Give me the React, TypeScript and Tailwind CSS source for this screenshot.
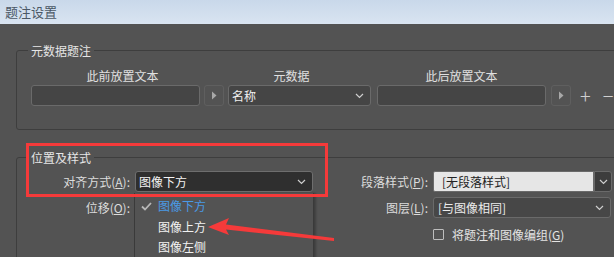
import React from 'react';

const FONT = { fontFamily: '"Microsoft YaHei", "Noto Sans CJK SC", "Noto Sans", sans-serif' };

function Chevron({ className = '' }: { className?: string }) {
  return (
    <svg className={className} width="9" height="6" viewBox="0 0 9 6" fill="none" stroke="currentColor" strokeWidth={1.2}>
      <path d="M1 1l3.5 3.5L8 1" />
    </svg>
  );
}

function PlayBtn() {
  return (
    <div className="w-[20px] h-[21px] rounded-[3px] border border-[#5f5f5f] flex items-center justify-center shrink-0">
      <svg width="6" height="9" viewBox="0 0 6 9">
        <path d="M1 0.5v8L5.5 4.5z" fill="#a8a8a8" />
      </svg>
    </div>
  );
}

export default function App() {
  return (
    <div className="relative w-[614px] h-[257px] overflow-hidden bg-[#535353] text-[12px] text-[#dcdcdc]" style={FONT}>
      {/* Title bar */}
      <div className="h-[24px] px-[5px] flex items-center bg-gradient-to-b from-[#c9d8ea] to-[#d9e4f1] text-[#4b5866] text-[13px]">
        题注设置
      </div>

      {/* Metadata caption group */}
      <fieldset className="ml-[16px] mt-[18px] w-[640px] border border-[#3e3e3e] rounded-[3px] pb-[23px]">
        <legend className="ml-[11px] px-[3px] leading-[17px] text-[#e6e6e6]">元数据题注</legend>
        <div className="flex pl-[14px] pt-[8px] leading-[17px] text-[#e0e0e0]">
          <div className="w-[169px] pl-[14px] text-center">此前放置文本</div>
          <div className="w-[28px]" />
          <div className="w-[143px] text-center pr-[16px]">元数据</div>
          <div className="w-[6px]" />
          <div className="w-[169px] text-center">此后放置文本</div>
        </div>
        <div className="flex items-center pl-[14px] mt-[1px]">
          <div className="w-[169px] h-[21px] rounded-[3px] border border-[#6a6a6a] bg-[#454545] shrink-0" />
          <div className="w-[4px]" />
          <PlayBtn />
          <div className="w-[4px]" />
          <div className="w-[143px] h-[21px] rounded-[3px] border border-[#6a6a6a] bg-[#454545] shrink-0 flex items-center justify-between pl-[3px] pr-[6px] text-[#f0f0f0]">
            <span>名称</span>
            <Chevron className="text-[#cfcfcf]" />
          </div>
          <div className="w-[6px]" />
          <div className="w-[169px] h-[21px] rounded-[3px] border border-[#6a6a6a] bg-[#454545] shrink-0" />
          <div className="w-[5px]" />
          <PlayBtn />
          <div className="w-[9px]" />
          <span className="text-[20px] leading-none text-[#d0d0d0] font-light">+</span>
          <div className="w-[12px]" />
          <span className="text-[20px] leading-none text-[#d0d0d0] font-light">−</span>
        </div>
      </fieldset>

      {/* Position & style group */}
      <fieldset className="ml-[16px] mt-[19px] w-[640px] h-[120px] border border-[#3e3e3e] rounded-[3px]">
        <legend className="ml-[11px] px-[3px] leading-[17px] text-[#e6e6e6]">位置及样式</legend>
        <div className="flex items-center mt-[5px] h-[21px]">
          <div className="w-[113px] text-right">
            对齐方式(<span className="underline">A</span>):
          </div>
          <div className="w-[5px]" />
          <div className="w-[178px] h-[21px] rounded-[3px] border border-[#6e6e6e] bg-[#2f2f2f] flex items-center justify-between pl-[3px] pr-[6px] text-[#f4f4f4] shrink-0">
            <span>图像下方</span>
            <Chevron className="text-[#cfcfcf]" />
          </div>
          <div className="w-[115px] text-right">
            段落样式(<span className="underline">P</span>):
          </div>
          <div className="w-[5px]" />
          <div className="flex h-[21px] shrink-0">
            <div className="w-[161px] bg-[#e6e6e6] border border-[#6a6a6a] rounded-l-[2px] text-[#222] pl-[8px] flex items-center">
              [无段落样式]
            </div>
            <div className="w-[18px] bg-[#3d3d3d] border border-[#6a6a6a] rounded-r-[3px] flex items-center justify-center">
              <Chevron className="text-[#cfcfcf]" />
            </div>
          </div>
        </div>
        <div className="flex items-center mt-[5px] h-[21px]">
          <div className="w-[113px] text-right">
            位移(<span className="underline">O</span>):
          </div>
          <div className="w-[183px]" />
          <div className="w-[115px] text-right">
            图层(<span className="underline">L</span>):
          </div>
          <div className="w-[5px]" />
          <div className="w-[178px] h-[21px] rounded-[3px] border border-[#6a6a6a] bg-[#474747] flex items-center justify-between pl-[4px] pr-[6px] text-[#ececec] shrink-0">
            <span>[与图像相同]</span>
            <Chevron className="text-[#cfcfcf]" />
          </div>
        </div>
        <div className="flex items-center mt-[10px] h-[13px] pl-[416px]">
          <div className="w-[11px] h-[11px] border border-[#bdbdbd] rounded-[1px] shrink-0" />
          <span className="ml-[8px] text-[#e4e4e4]">
            将题注和图像编组(<span className="underline">G</span>)
          </span>
        </div>
      </fieldset>

      {/* Open dropdown list */}
      <div className="absolute left-[134px] top-[193px] w-[180px] h-[70px] bg-[#535353] border-x border-[#3a3a3a] shadow-[2px_0_2px_rgba(0,0,0,0.25)] pt-[3px]">
        <div className="flex items-center h-[20px]">
          <svg className="ml-[6px]" width="11" height="9" viewBox="0 0 11 9" fill="none" stroke="#b8b8b8" strokeWidth={1.8}>
            <path d="M1 4.5l3 3L10 1" />
          </svg>
          <span className="ml-[6px] text-[#4a9ae6]">图像下方</span>
        </div>
        <div className="flex items-center h-[21px] pl-[23px] text-[#f2f2f2]">图像上方</div>
        <div className="flex items-center h-[20px] pl-[23px] text-[#f2f2f2]">图像左侧</div>
      </div>

      {/* Red annotation box */}
      <div className="absolute left-[26px] top-[143px] w-[302px] h-[54px] border-[3px] border-[#f53a3a] pointer-events-none" />

      {/* Red annotation arrow */}
      <svg className="absolute left-0 top-0 pointer-events-none" width="614" height="257">
        <path d="M208 227 L229 218 L226 224.5 L334 238 L334 241 L226 229.5 L229 235 Z" fill="#f53a3a" />
      </svg>
    </div>
  );
}
